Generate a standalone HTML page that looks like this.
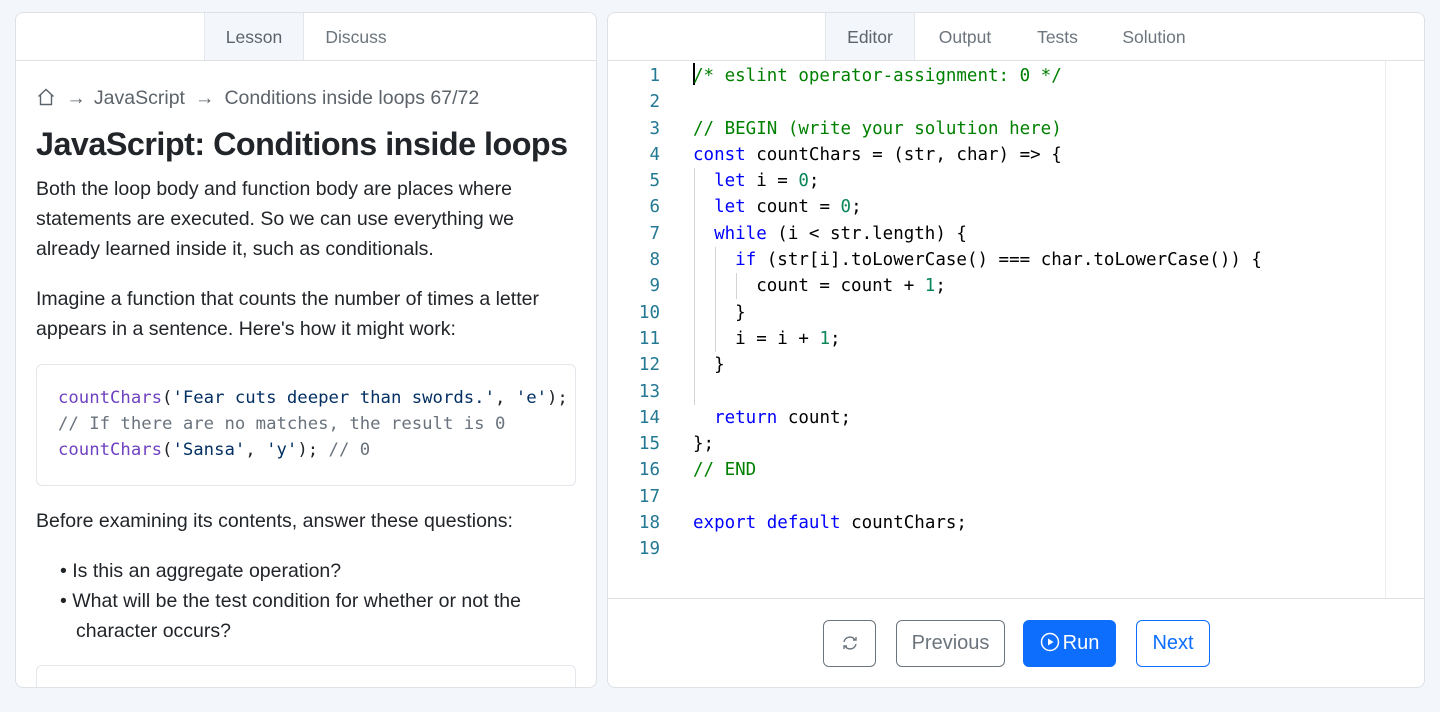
<!DOCTYPE html>
<html><head><meta charset="utf-8"><style>
*{box-sizing:border-box;margin:0;padding:0}
body{width:1440px;height:712px;background:#f3f6fa;font-family:"Liberation Sans",sans-serif;position:relative;overflow:hidden;color:#212529}
.panel{position:absolute;background:#fff;border:1px solid #dee2e6;border-radius:8px;overflow:hidden}
.tabs{position:absolute;left:0;right:0;top:0;height:48px;border-bottom:1px solid #dee2e6}
.tab{position:absolute;top:0;height:47px;line-height:49px;font-size:17.5px;color:#6c757d;text-align:center}
.tab.act{background:#f3f6fa;color:#5c636a;border-left:1px solid #e3e6ea;border-right:1px solid #e3e6ea}
.p{position:absolute;left:20px;font-size:19.5px;line-height:30px;color:#212529}
.cb{position:absolute;left:20px;width:540px;border:1px solid #e3e6ea;border-radius:6px;background:#fff}
.cl{position:absolute;left:0;font-size:17.3px;line-height:26px;white-space:pre;font-family:"DejaVu Sans Mono",monospace}
.ln{position:absolute;width:52px;text-align:right;left:0;color:#237893;font-size:17.5px;line-height:26.3px;font-family:"DejaVu Sans Mono",monospace}
.code{position:absolute;left:85px;top:50px;font-size:17.5px;line-height:26.3px;white-space:pre;font-family:"DejaVu Sans Mono",monospace;color:#000}
.k{color:#0000ff}.c{color:#008000}.n{color:#098658}
.btn{position:absolute;top:607px;height:47px;border-radius:6px;font-size:20px;line-height:45px;text-align:center}
</style></head><body>
<div class="panel" style="left:15px;top:12px;width:582px;height:676px">
 <div class="tabs"><div class="tab act" style="left:188px;width:100px">Lesson</div><div class="tab" style="left:288px;width:104px">Discuss</div></div>
 <div class="p" style="top:70px;color:#5c636a;font-size:19.5px">
  <svg width="20" height="20" viewBox="0 0 20 20" style="vertical-align:-3px"><path d="M2.5 9.5 L10 2.5 L17.5 9.5 M4.5 8 V17.5 H15.5 V8" fill="none" stroke="#5c636a" stroke-width="1.4"/></svg>
  <span style="margin:0 8px 0 5px">→</span>JavaScript<span style="margin:0 10px">→</span>Conditions inside loops 67/72</div>
 <div class="p" style="top:111px;font-size:32.3px;line-height:40px;font-weight:bold;color:#212529;letter-spacing:-0.5px">JavaScript: Conditions inside loops</div>
 <div class="p" style="top:161px;width:520px">Both the loop body and function body are places where statements are executed. So we can use everything we already learned inside it, such as conditionals.</div>
 <div class="p" style="top:271px;width:540px">Imagine a function that counts the number of times a letter appears in a sentence. Here's how it might work:</div>
 <div class="cb" style="top:351px;height:122px">
  <div class="cl" style="top:20px;left:21px"><span style="color:#6f42c1">countChars</span>(<span style="color:#032f62">'Fear cuts deeper than swords.'</span>, <span style="color:#032f62">'e'</span>);</div>
  <div class="cl" style="top:46px;left:21px;color:#6a737d">// If there are no matches, the result is 0</div>
  <div class="cl" style="top:72px;left:21px"><span style="color:#6f42c1">countChars</span>(<span style="color:#032f62">'Sansa'</span>, <span style="color:#032f62">'y'</span>); <span style="color:#6a737d">// 0</span></div>
 </div>
 <div class="p" style="top:493px">Before examining its contents, answer these questions:</div>
 <div class="p" style="top:543px;left:44px;width:496px;padding-left:16px;text-indent:-16px">• Is this an aggregate operation?</div>
 <div class="p" style="top:573px;left:44px;width:496px;padding-left:16px;text-indent:-16px">• What will be the test condition for whether or not the character occurs?</div>
 <div class="cb" style="top:652px;height:60px"></div>
</div>
<div class="panel" style="left:607px;top:12px;width:818px;height:676px">
 <div class="tabs"><div class="tab act" style="left:217px;width:90px">Editor</div><div class="tab" style="left:307px;width:100px">Output</div><div class="tab" style="left:407px;width:85px">Tests</div><div class="tab" style="left:492px;width:108px">Solution</div></div>
 <div style="position:absolute;left:777px;top:48px;width:1px;height:537px;background:#ececec"></div>
 <div style="position:absolute;left:85px;top:50px;width:2px;height:22px;background:#000"></div>
 <div style="position:absolute;left:86px;top:155px;width:1px;height:237px;background:#d3d3d3"></div>
 <div style="position:absolute;left:107px;top:234px;width:1px;height:105px;background:#d3d3d3"></div>
 <div style="position:absolute;left:128px;top:260px;width:1px;height:26px;background:#d3d3d3"></div>
 <div class="ln" style="top:50px">1<br>2<br>3<br>4<br>5<br>6<br>7<br>8<br>9<br>10<br>11<br>12<br>13<br>14<br>15<br>16<br>17<br>18<br>19</div>
 <div class="code"><span class="c">/* eslint operator-assignment: 0 */</span>

<span class="c">// BEGIN (write your solution here)</span>
<span class="k">const</span> countChars = (str, char) =&gt; {
  <span class="k">let</span> i = <span class="n">0</span>;
  <span class="k">let</span> count = <span class="n">0</span>;
  <span class="k">while</span> (i &lt; str.length) {
    <span class="k">if</span> (str[i].toLowerCase() === char.toLowerCase()) {
      count = count + <span class="n">1</span>;
    }
    i = i + <span class="n">1</span>;
  }

  <span class="k">return</span> count;
};
<span class="c">// END</span>

<span class="k">export</span> <span class="k">default</span> countChars;
</div>
 <div style="position:absolute;left:0;right:0;top:585px;height:1px;background:#dee2e6"></div>
 <div class="btn" style="left:215px;width:53px;border:1px solid #6c757d">
  <svg width="20" height="20" viewBox="0 0 20 20" style="vertical-align:-4px"><path d="M4 9 A6 6 0 0 1 15 7 M16 11 A6 6 0 0 1 5 13" fill="none" stroke="#6c757d" stroke-width="1.4"/><path d="M13 7 H16 V4 M7 13 H4 V16" fill="none" stroke="#6c757d" stroke-width="1.4"/></svg></div>
 <div class="btn" style="left:288px;width:109px;border:1px solid #6c757d;color:#6c757d">Previous</div>
 <div class="btn" style="left:415px;width:93px;background:#0d6efd;color:#fff;border:1px solid #0d6efd">
  <svg width="20" height="20" viewBox="0 0 20 20" style="vertical-align:-3px;margin-right:3px"><circle cx="10" cy="10" r="8.5" fill="none" stroke="#fff" stroke-width="1.5"/><path d="M8 6.5 L13.5 10 L8 13.5Z" fill="#fff"/></svg>Run</div>
 <div class="btn" style="left:528px;width:74px;border:1px solid #0d6efd;color:#0d6efd">Next</div>
</div>
</body></html>
